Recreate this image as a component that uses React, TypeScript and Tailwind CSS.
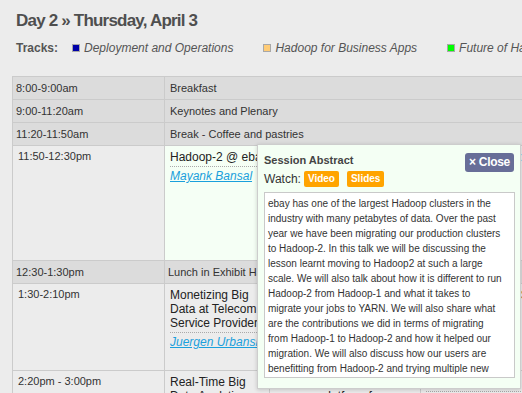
import React from "react";

const abstractLines = [
  "ebay has one of the largest Hadoop clusters in the",
  "industry with many petabytes of data. Over the past",
  "year we have been migrating our production clusters",
  "to Hadoop-2. In this talk we will be discussing the",
  "lesson learnt moving to Hadoop2 at such a large",
  "scale. We will also talk about how it is different to run",
  "Hadoop-2 from Hadoop-1 and what it takes to",
  "migrate your jobs to YARN. We will also share what",
  "are the contributions we did in terms of migrating",
  "from Hadoop-1 to Hadoop-2 and how it helped our",
  "migration. We will also discuss how our users are",
  "benefitting from Hadoop-2 and trying multiple new",
  "frameworks on YARN.",
];

function BreakRow({ time, label, labelPad = "pl-[5px]" }: { time: string; label: string; labelPad?: string }) {
  return (
    <div className="flex h-[23px] border-b border-[#cbcbcb] bg-[#dcdcdc] text-[11px] leading-[13px] text-[#333]">
      <div className="w-[152px] shrink-0 border-r border-[#cbcbcb] pl-[3px] flex items-center">{time}</div>
      <div className={`flex-1 flex items-center ${labelPad}`}>{label}</div>
    </div>
  );
}

function Session({ title, speaker }: { title: string; speaker: string }) {
  return (
    <div>
      <div className="text-[12px] leading-[14px] text-[#222] pb-[2px] border-b border-dotted border-[#aaa]">{title}</div>
      <div className="mt-[2px] text-[12px] leading-[14px] italic underline text-[#1aa0dc]">{speaker}</div>
    </div>
  );
}

function SessionRow({
  time,
  h,
  c2,
  c3,
  c4,
  mint = false,
}: {
  time: string;
  h: string;
  c2: React.ReactNode;
  c3: React.ReactNode;
  c4: React.ReactNode;
  mint?: boolean;
}) {
  return (
    <div className={`flex ${h} border-b border-[#cbcbcb] bg-[#ececec]`}>
      <div className="w-[152px] shrink-0 border-r border-[#cbcbcb] pl-[5px] pt-[4px] text-[11px] leading-[13px] text-[#333]">{time}</div>
      <div className={`w-[105px] shrink-0 border-r border-[#cbcbcb] pl-[5px] pt-[4px] ${mint ? "bg-[#f5fff5]" : ""}`}>{c2}</div>
      <div className="w-[151px] shrink-0 border-r border-[#cbcbcb] pl-[5px] pr-[4px] pt-[4px]">{c3}</div>
      <div className="w-[151px] shrink-0 border-r border-[#cbcbcb] pl-[5px] pr-[4px] pt-[4px]">{c4}</div>
      <div className="flex-1" />
    </div>
  );
}

function Track({ color, label }: { color: string; label: string }) {
  return (
    <div className="flex items-center gap-[4px]">
      <span className={`inline-block w-[8px] h-[8px] border border-[#a8a8a8] ${color}`} />
      <span className="italic text-[12px] leading-[14px] text-[#555] whitespace-nowrap">{label}</span>
    </div>
  );
}

export default function App() {
  return (
    <div
      className="relative w-[522px] h-[393px] overflow-hidden bg-[#ececec]"
      style={{ fontFamily: '"Liberation Sans", Arial, sans-serif' }}
    >
      <div className="w-[1000px]">
        <div className="pl-[16px] pt-[11px]">
          <h2 className="text-[17px] leading-[20px] font-bold tracking-[-0.8px] text-[#4f4f4f]">
            Day 2 » Thursday, April 3
          </h2>
          <div className="mt-[10px] flex items-center h-[14px]">
            <span className="text-[12px] leading-[14px] font-bold text-[#555] mr-[14px]">Tracks:</span>
            <div className="flex items-center gap-[30px]">
              <Track color="bg-[#0000a8]" label="Deployment and Operations" />
              <Track color="bg-[#ffcc77]" label="Hadoop for Business Apps" />
              <Track color="bg-[#00ff00]" label="Future of Hadoop" />
            </div>
          </div>
        </div>

        <div className="ml-[12px] mt-[21px] border-t border-l border-[#cbcbcb]">
          <BreakRow time="8:00-9:00am" label="Breakfast" />
          <BreakRow time="9:00-11:20am" label="Keynotes and Plenary" />
          <BreakRow time="11:20-11:50am" label="Break - Coffee and pastries" />
          <SessionRow
            time="11:50-12:30pm"
            h="h-[115px]"
            mint
            c2={<Session title="Hadoop-2 @ ebay" speaker="Mayank Bansal" />}
            c3={<Session title="Apache Hadoop YARN and Tez: Future of Data Processing" speaker="Bikas Saha" />}
            c4={<Session title="Securing Hadoop: A Practical Guide" speaker="Sanjay Radia" />}
          />
          <BreakRow time="12:30-1:30pm" label="Lunch in Exhibit Hall" labelPad="pl-[3px]" />
          <SessionRow
            time="1:30-2:10pm"
            h="h-[87px]"
            c2={<Session title="Monetizing Big Data at Telecom Service Providers" speaker="Juergen Urbanski" />}
            c3={<Session title="Hadoop Operations at Scale" speaker="Allen Wittenauer" />}
            c4={<Session title="Scaling Hive with Stinger" speaker="Alan Gates" />}
          />
          <SessionRow
            time="2:20pm - 3:00pm"
            h="h-[80px]"
            c2={<Session title="Real-Time Big Data Analytics" speaker="Anil Madan" />}
            c3={<Session title="Designing a general purpose platform for Hadoop" speaker="Owen O'Malley" />}
            c4={<Session title="Spark on YARN" speaker="Sandy Ryza" />}
          />
        </div>
      </div>

      <div className="absolute left-[257px] top-[144px] w-[264px] h-[245px] border border-[#cdcdcd] bg-[#f4fff4] shadow-[0_1px_4px_rgba(0,0,0,0.18)] pl-[6px] pt-[9px]">
        <div className="text-[11px] leading-[13px] font-bold text-[#444]">Session Abstract</div>
        <button className="absolute right-[6px] top-[8px] h-[19px] px-[4px] rounded-[3px] bg-[#686e98] text-white text-[12px] leading-[19px] font-bold tracking-[-0.3px]">
          × Close
        </button>
        <div className="mt-[4px] flex items-center h-[16px]">
          <span className="text-[12px] leading-[14px] text-[#333] mr-[3px]">Watch:</span>
          <span className="h-[16px] px-[4px] rounded-[2px] bg-[#ffa400] text-white text-[10px] leading-[16px] font-bold">Video</span>
          <span className="ml-[8px] h-[16px] px-[4px] rounded-[2px] bg-[#ffa400] text-white text-[10px] leading-[16px] font-bold">Slides</span>
        </div>
        <div className="mt-[5px] w-[251px] h-[186px] border border-[#c9c9c9] bg-white pl-[3px] pt-[3px] overflow-hidden text-[10px] leading-[15px] text-[#333]">
          {abstractLines.map((l, i) => (
            <div key={i} className="whitespace-nowrap">{l}</div>
          ))}
        </div>
      </div>
    </div>
  );
}
